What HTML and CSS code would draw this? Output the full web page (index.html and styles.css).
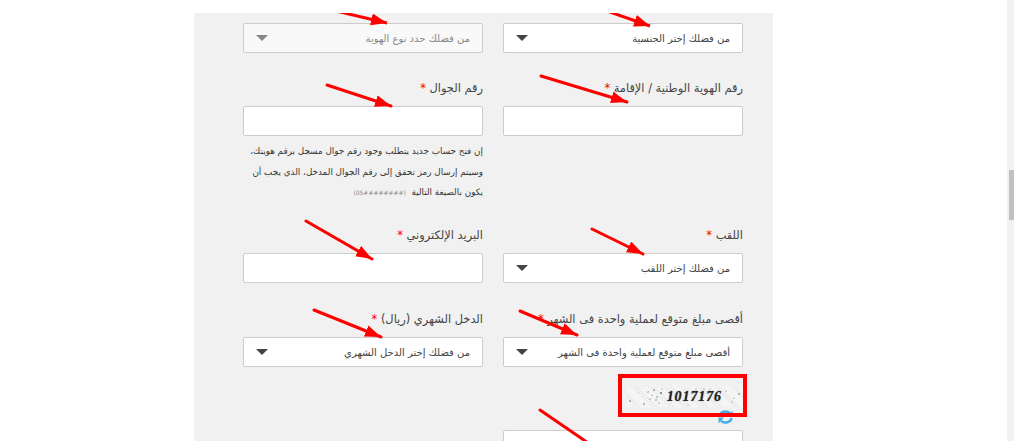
FILE: index.html
```html
<!DOCTYPE html>
<html lang="ar">
<head>
<meta charset="utf-8">
<title>فتح حساب</title>
<link rel="stylesheet" href="styles.css">
</head>
<body>
<div class="page">
  <form class="panel" dir="rtl">
    <div class="field">
      <div class="select"><span>من فضلك إختر الجنسية</span><i class="caret"></i></div>
    </div>
    <div class="field">
      <div class="select disabled"><span>من فضلك حدد نوع الهوية</span><i class="caret"></i></div>
    </div>

    <div class="field">
      <label class="label">رقم الهوية الوطنية / الإقامة <b>*</b></label>
      <div class="input"></div>
    </div>
    <div class="field">
      <label class="label">رقم الجوال <b>*</b></label>
      <div class="input"></div>
      <p class="hint">إن فتح حساب جديد يتطلب وجود رقم جوال مسجل برقم هويتك،<br>وسيتم إرسال رمز تحقق إلى رقم الجوال المدخل، الذي يجب أن<br>يكون بالصيغة التالية&nbsp; <bdi class="format" dir="ltr">(05########)</bdi></p>
    </div>

    <div class="field">
      <label class="label">اللقب <b>*</b></label>
      <div class="select"><span>من فضلك إختر اللقب</span><i class="caret"></i></div>
    </div>
    <div class="field">
      <label class="label">البريد الإلكتروني <b>*</b></label>
      <div class="input"></div>
    </div>

    <div class="field shifted">
      <label class="label">أقصى مبلغ متوقع لعملية واحدة فى الشهر <b>*</b></label>
      <div class="select"><span>أقصى مبلغ متوقع لعملية واحدة فى الشهر</span><i class="caret"></i></div>
    </div>
    <div class="field shifted">
      <label class="label">الدخل الشهري (ريال) <b>*</b></label>
      <div class="select"><span>من فضلك إختر الدخل الشهري</span><i class="caret"></i></div>
    </div>

    <div class="captcha-field">
      <div class="captcha">
        <svg class="noise" viewBox="0 0 117 20" width="117" height="20" aria-hidden="true">
          <g fill="#666">
            <circle cx="4" cy="14" r=".8"/><circle cx="18" cy="17" r=".8"/><circle cx="22" cy="5" r=".7"/><circle cx="28" cy="3" r=".8"/><circle cx="31" cy="10" r=".7"/><circle cx="35" cy="6" r=".9"/><circle cx="24" cy="12" r=".6"/><circle cx="30" cy="13" r=".7"/><circle cx="33" cy="16" r=".6"/><circle cx="26" cy="8" r=".6"/><circle cx="113" cy="7" r=".8"/><circle cx="108" cy="11" r=".5"/><circle cx="100" cy="4" r=".5"/><circle cx="70" cy="2" r=".6"/><circle cx="78" cy="2" r=".5"/><circle cx="84" cy="2" r=".5"/><circle cx="106" cy="15" r=".5"/><circle cx="36" cy="2" r=".5"/><circle cx="12" cy="6" r=".4"/><circle cx="62" cy="18" r=".4"/>
          </g>
        </svg>
        <span class="code">1017176</span>
      </div>
      <svg class="refresh" viewBox="0 0 15 14" width="15" height="14" aria-hidden="true">
        <path d="M1.5 6A6 5 0 0 1 12 3.2" fill="none" stroke="#45ade3" stroke-width="2.4"/>
        <path d="M14.5 .5V6.5H9Z" fill="#45ade3"/>
        <path d="M13.5 8A6 5 0 0 1 3 10.8" fill="none" stroke="#45ade3" stroke-width="2.4"/>
        <path d="M.5 13.5V7.5H6Z" fill="#45ade3"/>
      </svg>
    </div>
    <div class="spacer"></div>

    <div class="field last"><div class="input"></div></div>
  </form>
</div>

<div class="scrollbar"><div class="thumb"></div></div>

<div class="box-mark"></div>
<svg class="arrows" width="1014" height="441" viewBox="0 0 1014 441" aria-hidden="true">
  <defs>
    <marker id="head" markerUnits="userSpaceOnUse" markerWidth="18" markerHeight="14" refX="16" refY="6" orient="auto">
      <path d="M0 0L16 6L0 12Z" fill="#f00"/>
    </marker>
    <clipPath id="top"><rect x="0" y="13" width="1014" height="428"/></clipPath>
  </defs>
  <g stroke="#f00" stroke-width="3" stroke-linecap="round">
    <path d="M327 85L391 106" marker-end="url(#head)"/>
    <path d="M541 76L627 102" marker-end="url(#head)"/>
    <path d="M306 221L372 259" marker-end="url(#head)"/>
    <path d="M592 229L643 254" marker-end="url(#head)"/>
    <path d="M314 310L381 337" marker-end="url(#head)"/>
    <path d="M520 311L577 335" marker-end="url(#head)"/>
    <path d="M540 410L594 447"/>
  </g>
  <g clip-path="url(#top)" stroke="#f00" stroke-width="3">
    <path d="M336 11L387 23" marker-end="url(#head)"/>
    <path d="M607 11L650 26" marker-end="url(#head)"/>
  </g>
</svg>
</body>
</html>
```
FILE: styles.css
```css
* { box-sizing: border-box; }
html, body { margin: 0; height: 441px; overflow: hidden; background: #fff; }
body { font-family: "DejaVu Sans", "Noto Sans", sans-serif; color: #444; }

.page { padding: 13px 0 0 194px; }

.panel {
  width: 579px;
  height: 500px;
  margin: 0;
  padding: 10px 30px 0 49px;
  background: #f1f1f1;
  display: grid;
  grid-template-columns: 240px 240px;
  column-gap: 20px;
  row-gap: 25px;
  align-content: start;
}

.field { min-width: 0; }
.shifted { margin-top: 1px; }

.label {
  display: block;
  height: 28px;
  padding-top: 1px;
  font-size: 11.4px;
  line-height: 18px;
  color: #444;
  white-space: nowrap;
}
.label b { color: #f00; font-weight: 400; }

.input, .select {
  height: 30px;
  background: #fff;
  border: 1px solid #ccc;
  border-radius: 2px;
}

.select {
  display: flex;
  align-items: center;
  justify-content: space-between;
  padding: 0 12px;
  font-size: 10px;
  color: #444;
}
.select.disabled { background: #f9f9f9; color: #888; }
.select.disabled .caret { border-top-color: #888; }

.caret {
  width: 0;
  height: 0;
  border-left: 6px solid transparent;
  border-right: 6px solid transparent;
  border-top: 6px solid #444;
}

.hint {
  margin: 5px 0 0;
  height: 59px;
  font-size: 8.8px;
  line-height: 20.5px;
  color: #333;
  white-space: nowrap;
}
.format { font-size: 6px; color: #888; }

.captcha-field {
  position: relative;
  height: 40px;
  margin-top: -5px;
  margin-bottom: -1px;
}
.captcha {
  position: absolute;
  top: 0;
  right: 0;
  width: 117px;
  height: 20px;
  background: repeating-linear-gradient(45deg, #fafafa 0 1px, #e9e9e9 1px 2px);
  display: flex;
  align-items: center;
  justify-content: flex-start;
  padding-right: 21px;
}
.noise { position: absolute; inset: 0; }
.code {
  position: relative;
  direction: ltr;
  font: italic 700 14px "Liberation Serif", serif;
  letter-spacing: .9px;
  color: #222;
  text-shadow: 0 0 1px #666;
}
.refresh { position: absolute; top: 23px; right: 10px; }

.spacer { height: 1px; }
.last { grid-column: 1; margin-top: -21px; }

.scrollbar {
  position: absolute;
  top: 0;
  left: 1007px;
  width: 7px;
  height: 441px;
  background: #f1f1f1;
}
.thumb {
  position: absolute;
  top: 170px;
  left: 2px;
  width: 5px;
  height: 50px;
  background: #c1c1c1;
}

.box-mark {
  position: absolute;
  left: 618px;
  top: 374px;
  width: 129px;
  height: 43px;
  border: 4px solid #f00;
}
.arrows { position: absolute; left: 0; top: 0; pointer-events: none; }
```
